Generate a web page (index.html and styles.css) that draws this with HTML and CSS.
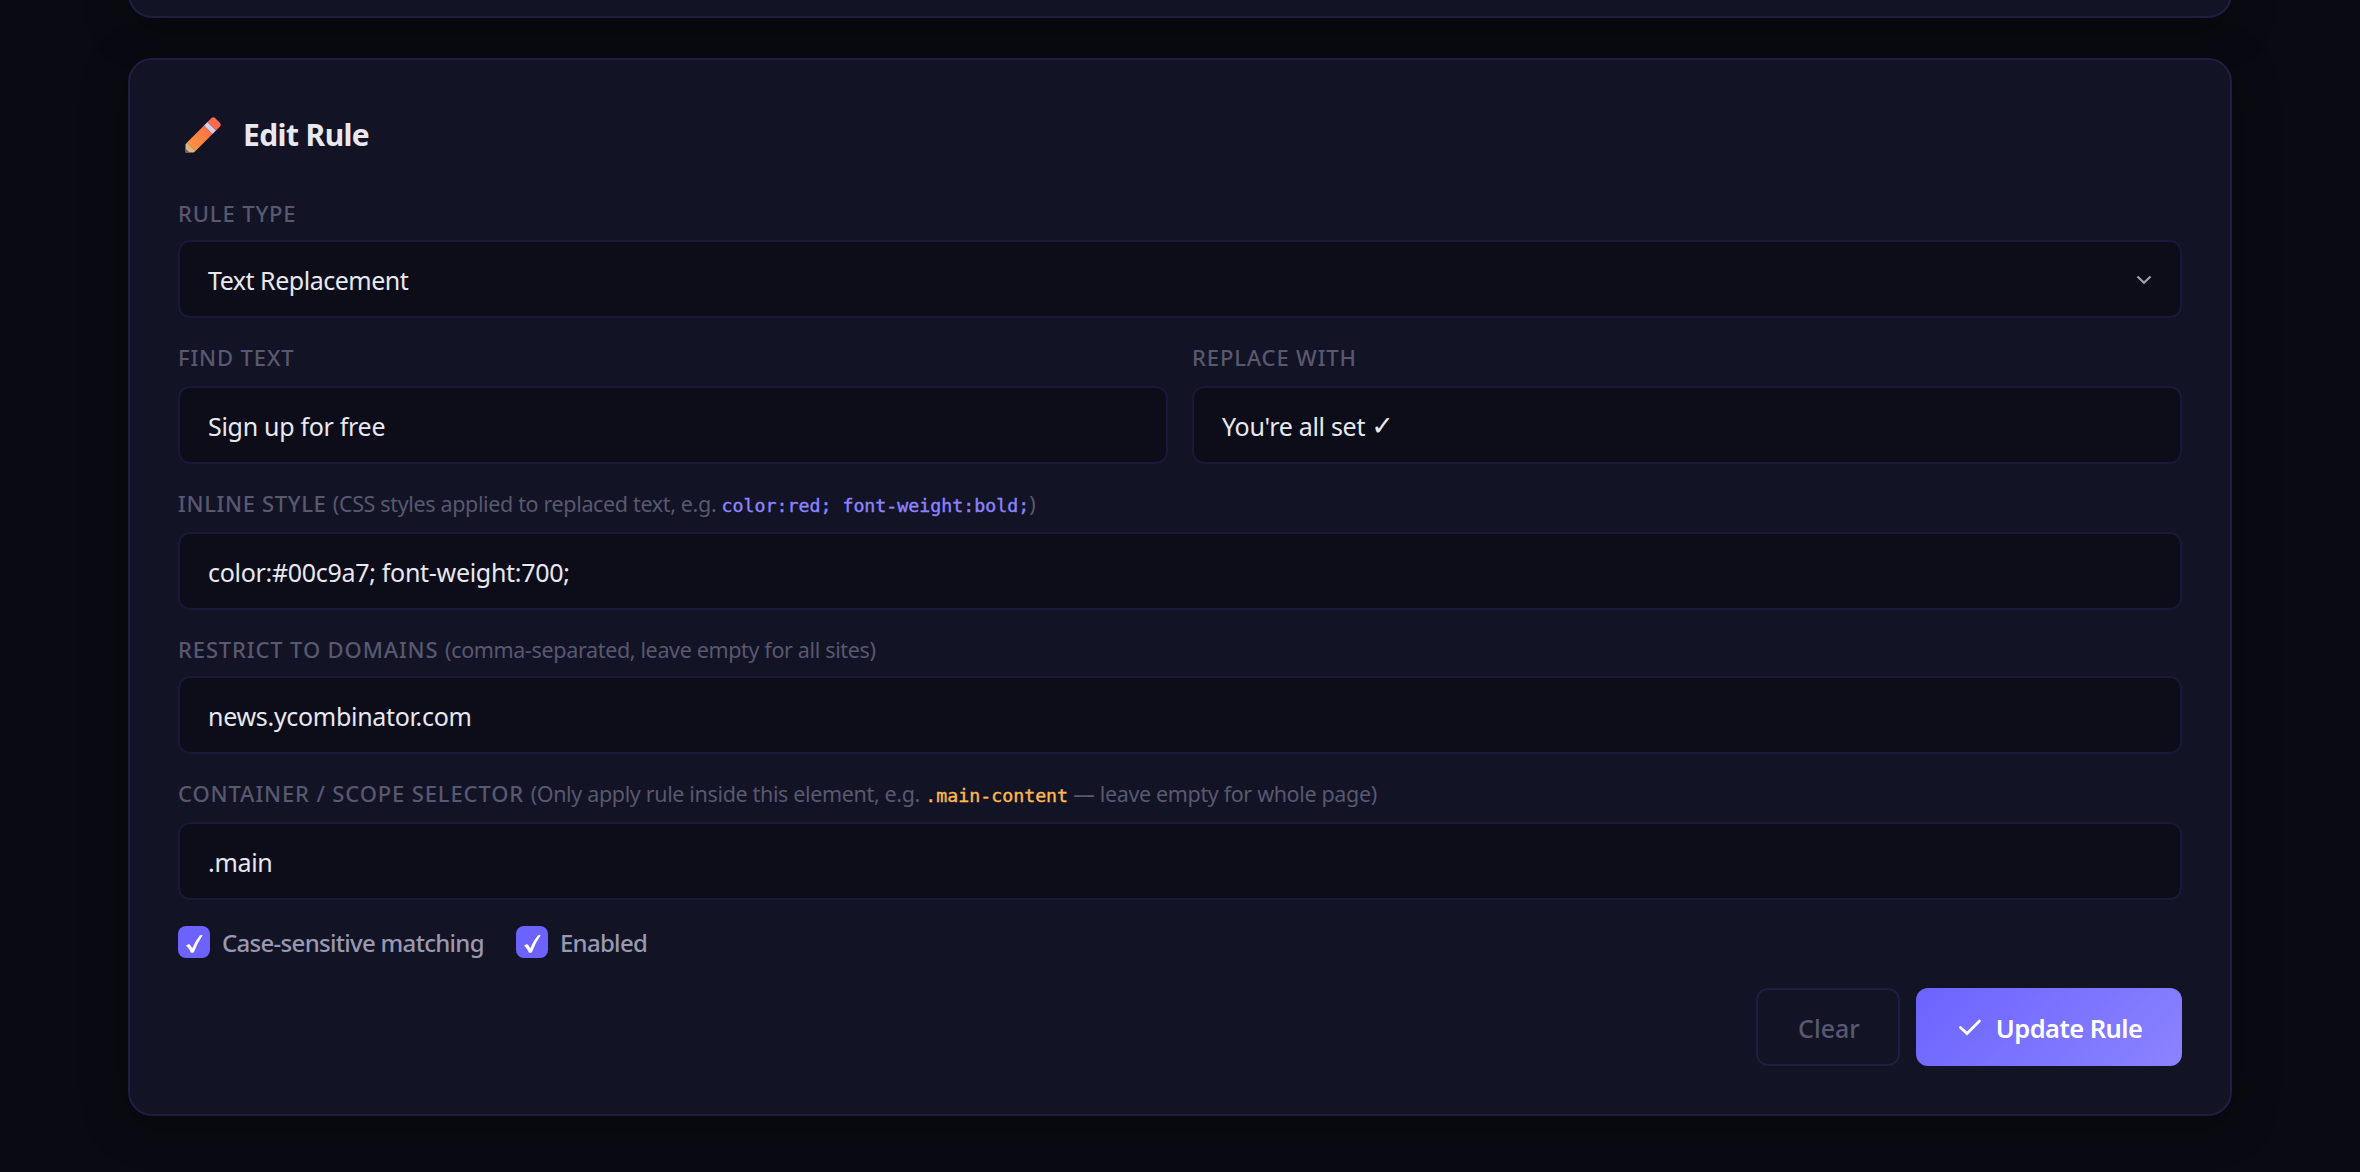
FILE: index.html
```html
<!DOCTYPE html>
<html lang="en">
<head>
<meta charset="utf-8">
<title>Edit Rule</title>
<link rel="stylesheet" href="styles.css">
</head>
<body>
<main class="page">
  <section class="card card-previous"></section>
  <section class="card card-editor">
    <header class="card-header">
      <svg class="pencil" viewBox="0 0 36 36" aria-hidden="true">
        <defs>
          <linearGradient id="wood" x1="0" y1="1" x2="1" y2="0">
            <stop offset="0" stop-color="#fb9c3a"/>
            <stop offset="1" stop-color="#ff6a4b"/>
          </linearGradient>
        </defs>
        <path d="M2 25.500 19 8.500l8.500 8.500-17 17z" fill="url(#wood)"/>
        <path d="M19 8.500 22.500 5l8.500 8.500-3.500 3.500z" fill="#d3d3e4"/>
        <path d="M22.500 5 26.300 1.200a3 3 0 0 1 4 0l4.500 4.500a3 3 0 0 1 0 4L31 13.500z" fill="#ff6a4f"/>
        <path d="M2 25.500 0.500 27.500V35.500H8.500l2-1.500z" fill="#dfb67c"/>
        <path d="M.5 31.500v4h4z" fill="#6c5c60"/>
      </svg>
      <h2 class="card-title">Edit Rule</h2>
    </header>

    <div class="field">
      <div class="label">RULE TYPE</div>
      <div class="control select">
        <span>Text Replacement</span>
        <svg class="chevron" viewBox="0 0 16 10" aria-hidden="true"><path d="M1.500 1.500L8 7.700l6.500-6.200"/></svg>
      </div>
    </div>

    <div class="field-row">
      <div class="field field-spaced">
        <div class="label">FIND TEXT</div>
        <div class="control">Sign up for free</div>
      </div>
      <div class="field field-spaced">
        <div class="label">REPLACE WITH</div>
        <div class="control">You're all set <span class="tick">✓</span></div>
      </div>
    </div>

    <div class="field field-spaced">
      <div class="label label-tight">INLINE STYLE <span class="hint">(CSS styles applied to replaced text, e.g. <code class="code">color:red; font-weight:bold;</code>)</span></div>
      <div class="control">color:#00c9a7; font-weight:700;</div>
    </div>

    <div class="field">
      <div class="label">RESTRICT TO DOMAINS <span class="hint">(comma-separated, leave empty for all sites)</span></div>
      <div class="control">news.ycombinator.com</div>
    </div>

    <div class="field field-spaced">
      <div class="label">CONTAINER / SCOPE SELECTOR <span class="hint">(Only apply rule inside this element, e.g. <code class="code code-amber">.main-content</code> — leave empty for whole page)</span></div>
      <div class="control">.main</div>
    </div>

    <div class="options">
      <div class="option">
        <span class="checkbox"><svg viewBox="0 0 32 32" aria-hidden="true"><path d="M8 19.700Q10 17.700 11.300 18.300 12.600 19 14.200 22.200 17.500 14.500 22 9.200L24.800 9Q19.500 16.500 15.900 26.200Q14.300 27.300 12.800 26.600 10.500 21 8 19.700z"/></svg></span>
        <span>Case-sensitive matching</span>
      </div>
      <div class="option">
        <span class="checkbox"><svg viewBox="0 0 32 32" aria-hidden="true"><path d="M8 19.700Q10 17.700 11.300 18.300 12.600 19 14.200 22.200 17.500 14.500 22 9.200L24.800 9Q19.500 16.500 15.900 26.200Q14.300 27.300 12.800 26.600 10.500 21 8 19.700z"/></svg></span>
        <span>Enabled</span>
      </div>
    </div>

    <footer class="actions">
      <button class="button button-ghost" type="button">Clear</button>
      <button class="button button-primary" type="button">
        <svg class="button-icon" viewBox="0 0 24 20" aria-hidden="true"><path d="M2.500 9.500l6.500 6L21.500 3"/></svg>
        Update Rule
      </button>
    </footer>
  </section>
</main>
</body>
</html>
```
FILE: styles.css
```css
* {
  box-sizing: border-box;
}

body {
  margin: 0;
  height: 1172px;
  overflow: hidden;
  background: #0a0a12;
  color: #e8e8f0;
  font-family: "Noto Sans", "Open Sans", sans-serif;
}

.page {
  width: 2104px;
  margin: 0 auto;
}

.card {
  background: #131326;
  border: 2px solid #1e1e42;
  border-radius: 24px;
  box-shadow: 0 8px 48px rgba(0, 0, 0, 0.3);
}

.card-previous {
  height: 60px;
  margin-top: -42px;
}

.card-editor {
  margin-top: 40px;
  padding: 48px;
  display: flex;
  flex-direction: column;
}

.card-header {
  display: flex;
  align-items: center;
  gap: 22px;
  height: 54px;
  padding-left: 7px;
  margin-bottom: 12px;
}

.pencil {
  width: 36px;
  height: 36px;
}

.card-title {
  margin: 0;
  font-size: 30px;
  line-height: 40px;
  font-weight: 700;
  letter-spacing: -0.6px;
}

.field {
  flex: 1;
  padding-top: 24px;
  display: flex;
  flex-direction: column;
  gap: 12px;
}

.field-spaced {
  gap: 14px;
}

.field-row {
  display: flex;
  gap: 24px;
}

.label {
  height: 30px;
  line-height: 30px;
  font-size: 22px;
  font-weight: 500;
  letter-spacing: 0.86px;
  color: #58586f;
  white-space: nowrap;
}

.label-tight {
  letter-spacing: 0.64px;
}

.hint {
  font-size: 21.5px;
  font-weight: 400;
  letter-spacing: -0.35px;
}

.code {
  font-family: "DejaVu Sans Mono", monospace;
  font-size: 18.3px;
  letter-spacing: -0.02px;
  color: #8b83ff;
  -webkit-text-stroke: 0.4px currentColor;
}

.code-amber {
  color: #ffb84d;
}

.control {
  height: 78px;
  padding: 2px 28px 0;
  display: flex;
  align-items: center;
  white-space: pre;
  background: #0d0d1a;
  border: 2px solid #181838;
  border-radius: 12px;
  font-size: 25px;
  letter-spacing: -0.3px;
}

.select {
  justify-content: space-between;
  letter-spacing: -0.48px;
}

.tick {
  font: 27px/30px "DejaVu Sans", sans-serif;
}

.chevron {
  width: 16px;
  height: 10px;
  fill: none;
  stroke: #a0a0b0;
  stroke-width: 2.2;
}

.options {
  display: flex;
  gap: 32px;
  margin-top: 26px;
}

.option {
  display: flex;
  align-items: center;
  gap: 12px;
  height: 32px;
  font-size: 24px;
  font-weight: 500;
  letter-spacing: -0.7px;
  color: #9898b0;
}

.checkbox {
  width: 32px;
  height: 32px;
  border-radius: 8px;
  background: #6c63ff;
}

.checkbox svg {
  display: block;
  fill: #fff;
}

.actions {
  display: flex;
  justify-content: flex-end;
  gap: 16px;
  margin-top: 30px;
}

.button {
  height: 78px;
  padding: 2px 0 0;
  display: flex;
  align-items: center;
  justify-content: center;
  border: 0;
  border-radius: 12px;
  font: 500 25px "Noto Sans", "Open Sans", sans-serif;
}

.button-ghost {
  width: 144px;
  padding-left: 2px;
  background: transparent;
  border: 2px solid #1e1e42;
  color: #58586f;
}

.button-primary {
  width: 266px;
  padding-left: 2px;
  gap: 14px;
  background: linear-gradient(135deg, #6c63ff, #8b83ff);
  color: #fff;
  font-size: 25.5px;
  font-weight: 600;
  letter-spacing: -0.55px;
}

.button-icon {
  width: 24px;
  height: 20px;
  fill: none;
  stroke: #fff;
  stroke-width: 2.8;
  stroke-linecap: round;
}
```
